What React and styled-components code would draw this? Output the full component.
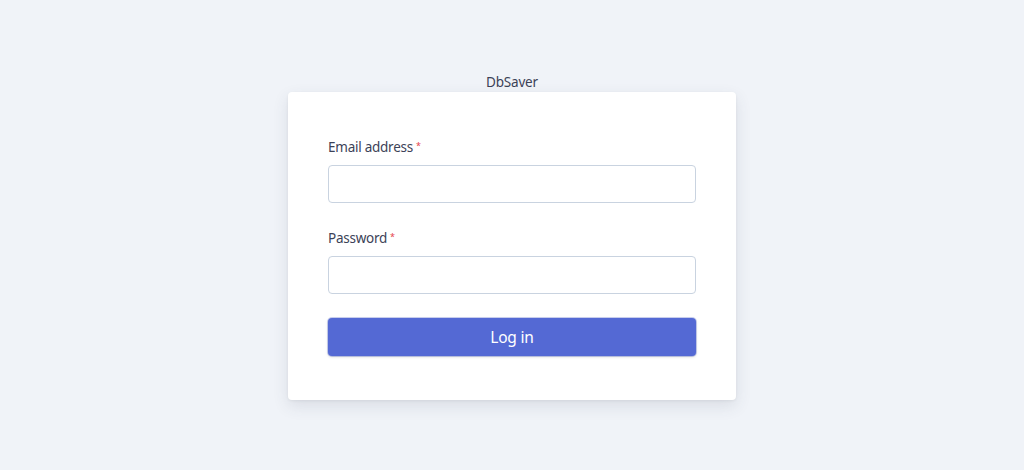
import React from "react";
import styled, { createGlobalStyle } from "styled-components";

const Global = createGlobalStyle`
  html, body { margin: 0; padding: 0; background: #f0f3f8; }
  body { font-family: "Noto Sans", "Open Sans", sans-serif; color: #3c4257; }
  * { box-sizing: border-box; }
`;

const Page = styled.div`
  min-height: 470px;
  display: flex;
  flex-direction: column;
  align-items: center;
  padding-top: 72px;
`;

const Title = styled.div`
  font-size: 13.5px;
  letter-spacing: -0.2px;
  line-height: 20px;
  color: #3c4257;
`;

const Card = styled.form`
  width: 448px;
  background: #fff;
  border-radius: 4px;
  box-shadow: 0 6px 16px rgba(60, 66, 87, 0.12), 0 1px 3px rgba(0, 0, 0, 0.06);
  padding: 45px 40px 44px;
  display: flex;
  flex-direction: column;
`;

const Field = styled.div`
  display: flex;
  flex-direction: column;
  gap: 8px;
  margin-bottom: ${(p) => p.$mb}px;
`;

const Label = styled.label`
  font-size: 13.5px;
  letter-spacing: -0.25px;
  line-height: 20px;
  color: #3c4257;
`;

const Req = styled.span`
  color: #e5424d;
  font-size: 9px;
  vertical-align: top;
  margin-left: 3px;
  line-height: 17px;
`;

const Input = styled.input`
  height: 38px;
  width: 100%;
  border: 1px solid #c9d3e0;
  border-radius: 4px;
  background: #fff;
  font-family: inherit;
  font-size: 14px;
  padding: 0 10px;
  outline: none;
`;

const Button = styled.button`
  height: 38px;
  width: 100%;
  border: none;
  border-radius: 4px;
  background: #5469d4;
  color: #fff;
  font-family: inherit;
  font-size: 15.5px;
  letter-spacing: -0.2px;
  box-shadow: 0 1px 3px rgba(0, 0, 0, 0.15), 0 0 0 1px rgba(84, 105, 212, 0.3);
  cursor: pointer;
`;

export default function App() {
  return (
    <>
      <Global />
      <Page>
        <Title>DbSaver</Title>
        <Card onSubmit={(e) => e.preventDefault()}>
          <Field $mb={25}>
            <Label>
              Email address<Req>*</Req>
            </Label>
            <Input type="email" />
          </Field>
          <Field $mb={24}>
            <Label>
              Password<Req>*</Req>
            </Label>
            <Input type="password" />
          </Field>
          <Button type="submit">Log in</Button>
        </Card>
      </Page>
    </>
  );
}
